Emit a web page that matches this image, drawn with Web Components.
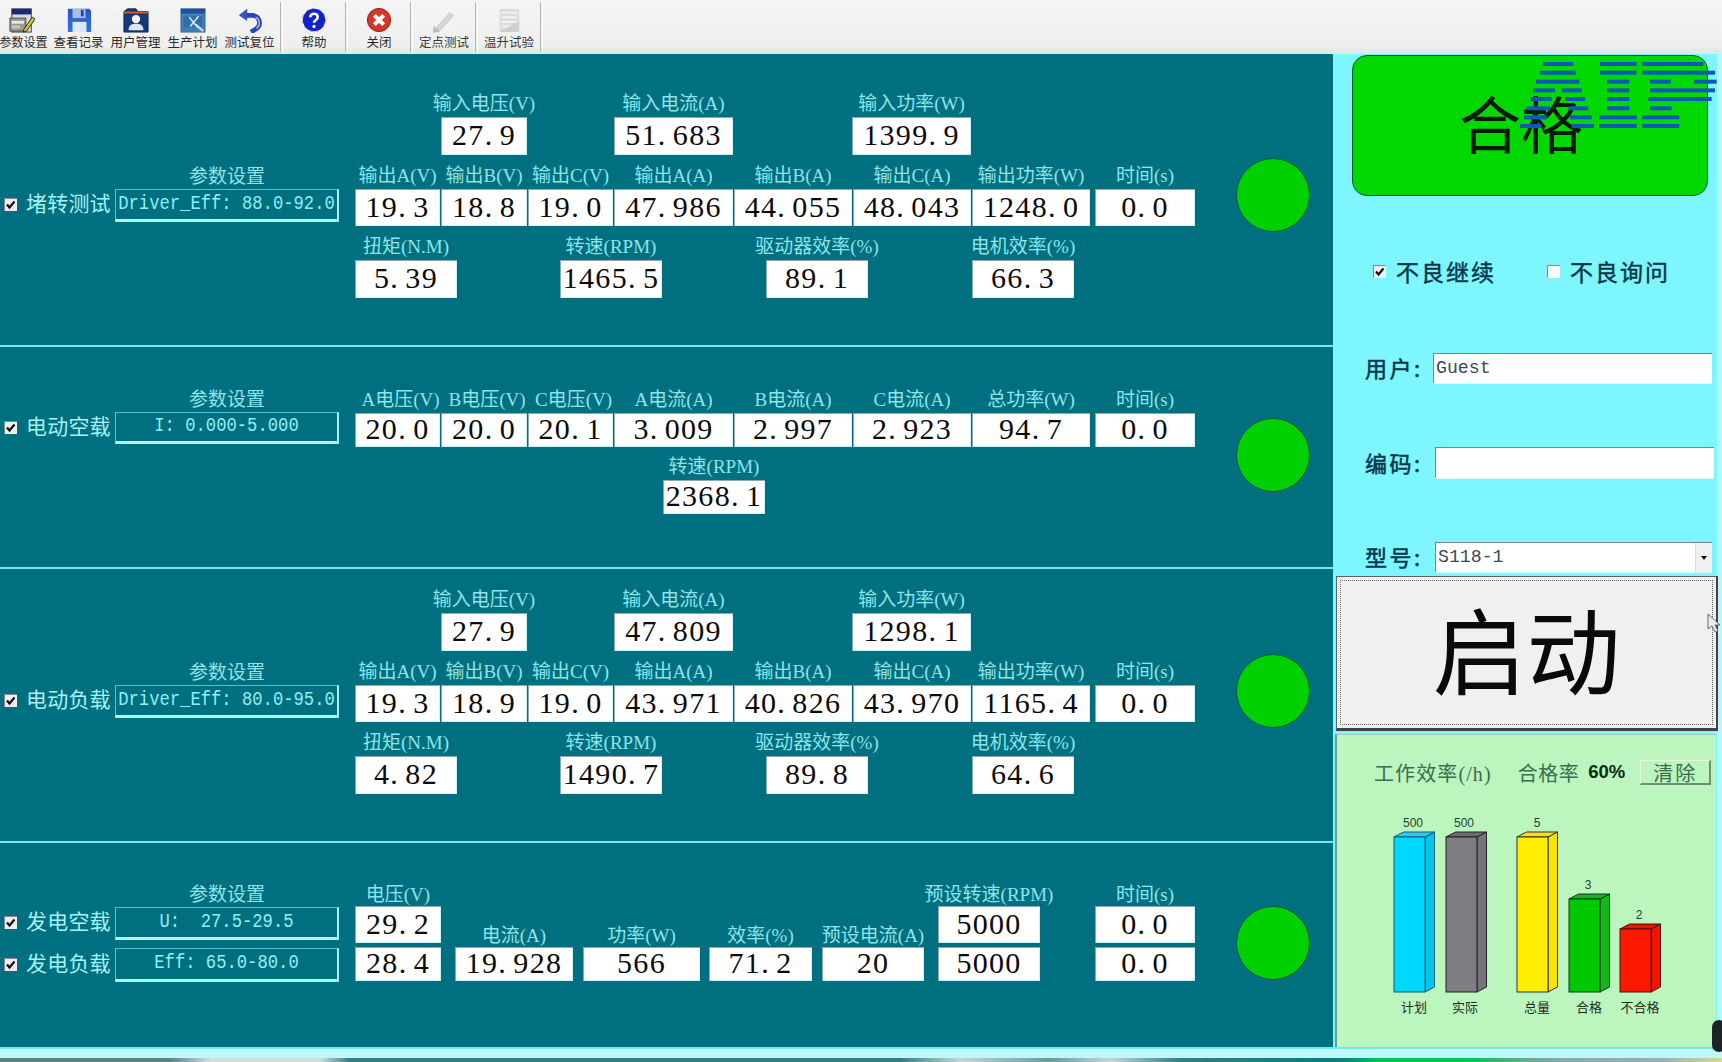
<!DOCTYPE html>
<html lang="zh"><head><meta charset="utf-8"><title>测试</title>
<style>
html,body{margin:0;padding:0;background:#007080;overflow:hidden}
body{width:1722px;height:1062px;font-family:"Liberation Serif","Noto Sans CJK SC",serif}
</style></head>
<body>
<test-app>
  <app-toolbar slot="top">
    <tool-button w="57" text="参数设置" icon="params" style="margin-left:-7px;--fs:12px;--tx:4px"></tool-button>
    <tool-button w="57" text="查看记录" icon="save"></tool-button>
    <tool-button w="57" text="用户管理" icon="user"></tool-button>
    <tool-button w="57" text="生产计划" icon="plan"></tool-button>
    <tool-button w="57" text="测试复位" icon="undo"></tool-button>
    <tool-sep style="margin-left:2px"></tool-sep>
    <tool-button w="62" text="帮助" icon="help"></tool-button>
    <tool-sep></tool-sep>
    <tool-button w="62" text="关闭" icon="close"></tool-button>
    <tool-sep></tool-sep>
    <tool-button w="62" text="定点测试" icon="pen"></tool-button>
    <tool-sep></tool-sep>
    <tool-button w="62" text="温升试验" icon="doc"></tool-button>
    <tool-sep></tool-sep>
  </app-toolbar>

  <test-section slot="tests" style="--h:293px;--head:111px;--center:37px;--lamp:104px">
    <test-head slot="head" name="堵转测试" param="Driver_Eff: 88.0-92.0" heading="参数设置" style="--ph:33px"></test-head>
    <metric-line>
      <metric-field label="输入电压(V)" value="27.9" ml="86" w="86" h="38"></metric-field>
      <metric-field label="输入电流(A)" value="51.683" ml="87" w="119" h="38"></metric-field>
      <metric-field label="输入功率(W)" value="1399.9" ml="119" w="119" h="38"></metric-field>
    </metric-line>
    <metric-line>
      <metric-field label="输出A(V)" value="19.3" w="85" h="37"></metric-field>
      <metric-field label="输出B(V)" value="18.8" ml="1" w="86" h="37"></metric-field>
      <metric-field label="输出C(V)" value="19.0" ml="1" w="85" h="37"></metric-field>
      <metric-field label="输出A(A)" value="47.986" ml="1" w="119" h="37"></metric-field>
      <metric-field label="输出B(A)" value="44.055" ml="1" w="118" h="37"></metric-field>
      <metric-field label="输出C(A)" value="48.043" ml="1" w="118" h="37"></metric-field>
      <metric-field label="输出功率(W)" value="1248.0" ml="1" w="118" h="37"></metric-field>
      <metric-field label="时间(s)" value="0.0" ml="5" w="100" h="37"></metric-field>
    </metric-line>
    <metric-line>
      <metric-field label="扭矩(N.M)" value="5.39" w="102" h="38"></metric-field>
      <metric-field label="转速(RPM)" value="1465.5" ml="103" w="102" h="38"></metric-field>
      <metric-field label="驱动器效率(%)" value="89.1" ml="104" w="102" h="38"></metric-field>
      <metric-field label="电机效率(%)" value="66.3" ml="104" w="102" h="38"></metric-field>
    </metric-line>
    <status-lamp slot="lamp"></status-lamp>
  </test-section>

  <test-section slot="tests" style="--h:222px;--head:41px;--center:40px;--lamp:71px;--gap:7px">
    <test-head slot="head" name="电动空载" param="I: 0.000-5.000" heading="参数设置" style="--ph:32px"></test-head>
    <metric-line>
      <metric-field label="A电压(V)" value="20.0" w="85" h="34" style="--lx:6px"></metric-field>
      <metric-field label="B电压(V)" value="20.0" ml="1" w="86" h="34" style="--lx:6px"></metric-field>
      <metric-field label="C电压(V)" value="20.1" ml="1" w="85" h="34" style="--lx:6px"></metric-field>
      <metric-field label="A电流(A)" value="3.009" ml="1" w="119" h="34"></metric-field>
      <metric-field label="B电流(A)" value="2.997" ml="1" w="118" h="34"></metric-field>
      <metric-field label="C电流(A)" value="2.923" ml="1" w="118" h="34"></metric-field>
      <metric-field label="总功率(W)" value="94.7" ml="1" w="118" h="34"></metric-field>
      <metric-field label="时间(s)" value="0.0" ml="5" w="100" h="34"></metric-field>
    </metric-line>
    <metric-line>
      <metric-field label="转速(RPM)" value="2368.1" ml="308" w="102" h="34"></metric-field>
    </metric-line>
    <status-lamp slot="lamp"></status-lamp>
  </test-section>

  <test-section slot="tests" style="--h:274px;--head:92px;--center:18px;--lamp:85px">
    <test-head slot="head" name="电动负载" param="Driver_Eff: 80.0-95.0" heading="参数设置" style="--ph:33px"></test-head>
    <metric-line>
      <metric-field label="输入电压(V)" value="27.9" ml="86" w="86" h="38"></metric-field>
      <metric-field label="输入电流(A)" value="47.809" ml="87" w="119" h="38"></metric-field>
      <metric-field label="输入功率(W)" value="1298.1" ml="119" w="119" h="38"></metric-field>
    </metric-line>
    <metric-line>
      <metric-field label="输出A(V)" value="19.3" w="85" h="37"></metric-field>
      <metric-field label="输出B(V)" value="18.9" ml="1" w="86" h="37"></metric-field>
      <metric-field label="输出C(V)" value="19.0" ml="1" w="85" h="37"></metric-field>
      <metric-field label="输出A(A)" value="43.971" ml="1" w="119" h="37"></metric-field>
      <metric-field label="输出B(A)" value="40.826" ml="1" w="118" h="37"></metric-field>
      <metric-field label="输出C(A)" value="43.970" ml="1" w="118" h="37"></metric-field>
      <metric-field label="输出功率(W)" value="1165.4" ml="1" w="118" h="37"></metric-field>
      <metric-field label="时间(s)" value="0.0" ml="5" w="100" h="37"></metric-field>
    </metric-line>
    <metric-line>
      <metric-field label="扭矩(N.M)" value="4.82" w="102" h="38"></metric-field>
      <metric-field label="转速(RPM)" value="1490.7" ml="103" w="102" h="38"></metric-field>
      <metric-field label="驱动器效率(%)" value="89.8" ml="104" w="102" h="38"></metric-field>
      <metric-field label="电机效率(%)" value="64.6" ml="104" w="102" h="38"></metric-field>
    </metric-line>
    <status-lamp slot="lamp"></status-lamp>
  </test-section>

  <test-section slot="tests" style="--h:204px;--head:40px;--center:41px;--lamp:63px;--rule:transparent">
    <test-head slot="head" name="发电空载" param="U:  27.5-29.5" heading="参数设置" style="--ph:33px"></test-head>
    <test-head slot="head" name="发电负载" param="Eff: 65.0-80.0" style="--ph:34px;margin-top:8px"></test-head>
    <metric-line>
      <metric-field label="电压(V)" value="29.2" value2="28.4" w="86" h="37" h2="34" style="--lh:22px"></metric-field>
      <metric-field label="电流(A)" value="19.928" ml="14" w="118" h="34" style="--lh:22px"></metric-field>
      <metric-field label="功率(W)" value="566" ml="10" w="117" h="34" style="--lh:22px"></metric-field>
      <metric-field label="效率(%)" value="71.2" ml="9" w="103" h="34" style="--lh:22px"></metric-field>
      <metric-field label="预设电流(A)" value="20" ml="10" w="102" h="34" style="--lh:22px"></metric-field>
      <metric-field label="预设转速(RPM)" value="5000" value2="5000" ml="14" w="102" h="37" h2="34" style="--lh:22px"></metric-field>
      <metric-field label="时间(s)" value="0.0" value2="0.0" ml="55" w="100" h="37" h2="34" style="--lh:22px"></metric-field>
    </metric-line>
    <status-lamp slot="lamp"></status-lamp>
  </test-section>

  <side-panel slot="side">
    <result-box>合格</result-box>
    <option-row>
      <check-box checked style="--cb:#f4eef4"></check-box><span>不良继续</span>
      <check-box style="margin-left:51px;--cb:#fff"></check-box><span>不良询问</span>
    </option-row>
    <form-row label="用户:" value="Guest" w="279" lw="68" h="30" style="margin-top:70px"></form-row>
    <form-row label="编码:" value="" w="279" lw="70" h="31" style="margin-top:64px"></form-row>
    <form-row label="型号:" value="S118-1" w="277" lw="70" h="30" combo style="margin-top:64px"></form-row>
    <start-button>启动</start-button>
    <stats-panel></stats-panel>
  </side-panel>
</test-app>

<script>
const CJK='"Liberation Serif","Noto Sans CJK SC",serif';
const def=(n,html,extra)=>{
  customElements.define(n,class extends HTMLElement{
    constructor(){super();this.attachShadow({mode:'open'}).innerHTML=html}
    connectedCallback(){extra&&extra.call(this,this.shadowRoot)}
  });
};

def('test-app',`<style>
:host{display:grid;position:relative;width:1722px;height:1062px;overflow:hidden;
grid-template-columns:1333px 389px;grid-template-rows:54px 993px 11px 4px;font-family:${CJK}}
.top{grid-column:1/3}
.tests{display:flex;flex-direction:column;background:#007080}
.band{grid-column:1/3;background:linear-gradient(#6fe9f2 0 2px,#bff7fb 2px)}
.strip{grid-column:1/3;background:linear-gradient(90deg,#5d7f84 0,#5d7f84 170px,#d4dcdc 210px,#d4dcdc 320px,#2f7f86 350px,#2f7f86 900px,#c8d4d4 960px,#6a9a9a 1050px,#c8d4d4 1110px,#2f7f86 1180px,#00807f 1340px,#0cc050 1380px,#0cc050 1470px,#8aa8a8 1560px,#9ab0b0 1660px,#d8d890 1722px)}
.blob{position:absolute;left:1712px;top:1020px;width:14px;height:32px;border-radius:8px;background:#1c2225}
</style>
<div class="top"><slot name="top"></slot></div>
<div class="tests"><slot name="tests"></slot></div>
<slot name="side"></slot>
<div class="band"></div><div class="strip"></div><div class="blob"></div>`);

def('app-toolbar',`<style>
:host{display:flex;height:54px;background:linear-gradient(#f4f4f4,#efefef 85%,#dfe4e4);font-family:"Noto Sans CJK SC",sans-serif}
</style><slot></slot>`);

const ICONS={
params:`<rect x="3" y="2" width="21" height="25" fill="#d4d8e0" stroke="#3a3f55"/><rect x="3" y="2" width="21" height="6" fill="#1d2a70"/><rect x="1" y="12" width="17" height="14" fill="#9a9a94" stroke="#444"/><rect x="3" y="15" width="13" height="3" fill="#e8e8e0"/><rect x="3" y="20" width="9" height="3" fill="#c8c8c0"/><path d="M16 24l9-13 3 2-9 13-4 1z" fill="#d8c22a" stroke="#222" stroke-width="1"/>`,
save:`<path d="M2 2h23l2 2v23H2z" fill="url(#fg)"/><rect x="7" y="2" width="14" height="10" fill="#a8bde0"/><rect x="16" y="3" width="3" height="7" fill="#1d4bb0"/><rect x="7" y="16" width="15" height="11" fill="#dfe7f4"/><defs><linearGradient id="fg" x1="0" y1="0" x2="0" y2="1"><stop offset="0" stop-color="#2d55b8"/><stop offset="1" stop-color="#2a78e8"/></linearGradient></defs>`,
user:`<path d="M1 5l4-3h9l2 3h11v22H1z" fill="#143a7a" stroke="#0d2650"/><rect x="1" y="5" width="26" height="2" fill="#d9572a"/><circle cx="14" cy="13" r="4.5" fill="#f2f2f2"/><path d="M6 25c0-6 4-7 8-7s8 1 8 7z" fill="#dfe6f2"/>`,
plan:`<rect x="1" y="2" width="26" height="25" fill="#3d7fbb" stroke="#4a6a90"/><rect x="1" y="2" width="26" height="5" fill="#1f4f95"/><rect x="4" y="10" width="20" height="12" fill="#2f6ca8"/><path d="M10 11l9 11M20 10l-9 11" stroke="#dfe9f4" stroke-width="1.6"/><path d="M17 19l8 7" stroke="#c8d8ea" stroke-width="2.6"/>`,
undo:`<path d="M9 9h8a8 8 0 0 1 3 15l-5 3" fill="none" stroke="#2b44b5" stroke-width="5"/><path d="M2 9l9-7v13z" fill="#3355c4"/><path d="M20 11a7 7 0 0 1 1 12" fill="none" stroke="#a7b8e6" stroke-width="1.5"/>`,
help:`<circle cx="14" cy="14" r="12" fill="#1322c8"/><circle cx="14" cy="14" r="12.5" fill="none" stroke="#8a96a8" stroke-dasharray="3 4"/><path d="M10 11c0-5 8-5 8 0 0 3-4 3-4 6" fill="none" stroke="#fff" stroke-width="2.8"/><circle cx="14" cy="21" r="1.8" fill="#fff"/>`,
close:`<circle cx="14" cy="14" r="12.5" fill="#d6362a" stroke="#8a1a14"/><path d="M9 9l10 10M19 9L9 19" stroke="#fff" stroke-width="4.4"/>`,
pen:`<rect x="4" y="2" width="22" height="25" fill="#f3f3f3"/><path d="M4 26l17-20M7 27l17-19" stroke="#d2d2d2" stroke-width="3"/><path d="M3 20l6 6-7 2z" fill="#bdbdbd"/>`,
doc:`<rect x="4" y="2" width="21" height="25" fill="#dcdcdc"/><path d="M6 6h17M6 11h17M6 16h17M6 21h17" stroke="#f2f2f2" stroke-width="2"/><path d="M4 27l21-12v12z" fill="#cfcfcf"/>`
};
def('tool-button',`<style>
:host{display:flex;flex-direction:column;align-items:center;flex:none;padding-top:7px;box-sizing:border-box;height:54px;color:#2a2a2a}
svg{width:26px;height:26px;display:block}
span{font-size:var(--fs,12.5px);line-height:14px;margin-top:2px;margin-left:var(--tx,0);white-space:nowrap}
</style><svg viewBox="0 0 28 28"></svg><span></span>`,function(r){
  this.style.width=this.getAttribute('w')+'px';
  r.querySelector('span').textContent=this.getAttribute('text');
  r.querySelector('svg').innerHTML=ICONS[this.getAttribute('icon')];
  if(['pen','doc'].includes(this.getAttribute('icon')))r.querySelector('span').style.color='#3a3a3a';
});
def('tool-sep',`<style>:host{display:block;flex:none;width:3px;height:50px;box-sizing:border-box;border-left:1px solid #b4b4b4;border-right:1px solid #fff;margin-top:2px}</style>`);

def('test-section',`<style>
:host{display:grid;grid-template-columns:355px 881px 74px;box-sizing:border-box;height:var(--h);border-bottom:2px solid var(--rule,#6fe9f2);flex:none}
.l{padding-top:var(--head)}
.c{padding-top:var(--center);display:flex;flex-direction:column;gap:var(--gap,8px)}
.p{padding-top:var(--lamp)}
</style><div class="l"><slot name="head"></slot></div><div class="c"><slot></slot></div><div class="p"><slot name="lamp"></slot></div>`);

def('test-head',`<style>
:host{display:grid;grid-template-columns:13px 98px 224px;padding-left:4px;color:#a8f2f6}
.t{grid-column:3;grid-row:1;height:24px;line-height:24px;text-align:center;font-size:19px;color:#8fe4ea}
check-box{grid-column:1;grid-row:2;align-self:center;margin-top:-2px}
.n{grid-column:2;grid-row:2;align-self:center;font-size:21px;line-height:24px;margin:0 0 3px 9px;letter-spacing:.2px;white-space:nowrap;color:#a8f2f6}
.p{grid-column:3;grid-row:2;height:var(--ph);box-sizing:border-box;display:flex;align-items:center;justify-content:center;
border:1px solid #52c4cf;border-bottom:3px solid #a9f4f8;border-right:2px solid #a9f4f8;width:224px;
font:17.2px/1 "Liberation Mono",monospace;color:#93eef2;white-space:pre;padding-bottom:2px}
.p span{display:block;transform:scaleY(1.2)}
</style><div class="t"></div><check-box checked style="--cb:#eee"></check-box><div class="n"></div><div class="p"><span></span></div>`,function(r){
  const h=this.getAttribute('heading');const t=r.querySelector('.t');
  if(h)t.textContent=h;else t.remove();
  r.querySelector('.n').textContent=this.getAttribute('name');
  r.querySelector('.p span').textContent=this.getAttribute('param');
});

def('check-box',`<style>
:host{display:block;width:13px;height:13px;background:var(--cb,#fff);box-shadow:inset 1px 1px 0 #8a8a8a}
svg{display:block;width:13px;height:13px}
</style><svg viewBox="0 0 13 13"><path d="M3 6.5l2.5 3 5-6" fill="none" stroke="#111" stroke-width="2.2"/></svg>`,function(r){
  if(!this.hasAttribute('checked'))r.querySelector('svg').style.display='none';
});

def('metric-line',`<style>:host{display:flex;align-items:flex-end}</style><slot></slot>`);

def('metric-field',`<style>
:host{display:flex;flex-direction:column;flex:none}
.l{height:var(--lh,26px);line-height:var(--lh,26px);display:flex;justify-content:center;white-space:nowrap;font-size:19px;color:#8fe4ea;padding-left:var(--lx,0)}
.l span{flex:none}
.v{background:#fff;box-sizing:border-box;display:flex;align-items:center;justify-content:center;color:#0a0a0a;padding-bottom:2px;
font:30px/1 "Liberation Serif",serif;letter-spacing:1.3px;white-space:nowrap;
box-shadow:inset 1px 1px 0 #8fa9b0,inset -1px -1px 0 #c8f4f6}
.v+.v{margin-top:4px}
.d{display:inline-block;width:15px}
</style><div class="l"><span></span></div>`,function(r){
  this.style.width=this.getAttribute('w')+'px';
  this.style.marginLeft=(this.getAttribute('ml')||0)+'px';
  r.querySelector('.l span').textContent=this.getAttribute('label');
  const add=(val,h)=>{const b=document.createElement('div');b.className='v';b.style.height=h+'px';
    if(+h<=34)b.style.paddingBottom='3px';
    val.split('.').forEach((p,i)=>{if(i){const s=document.createElement('span');s.className='d';s.textContent='.';b.append(s)}b.append(p)});
    r.append(b)};
  if(r.querySelector('.v'))return;
  add(this.getAttribute('value'),this.getAttribute('h'));
  if(this.hasAttribute('value2'))add(this.getAttribute('value2'),this.getAttribute('h2'));
});

def('status-lamp',`<style>:host{display:block;width:74px;height:74px;border-radius:50%;background:#00d000;box-sizing:border-box;border:1.5px solid #0b5a3a}</style>`);

def('side-panel',`<style>
:host{display:flex;flex-direction:column;background:linear-gradient(270deg,#b8f8fb 0 5px,#7df6ff 5px);font-family:${CJK}}
</style><slot></slot>`);

const stripes=[[72,[[670,760],[840,950],[967,1150]]],[98,[[660,768],[840,950],[967,1185]]],[125,[[648,778],[862,928],[990,1052],[1122,1190]]],[151,[[640,705],[725,785],[862,928],[990,1185]]],[177,[[632,695],[735,795],[862,928],[985,1175]]],[205,[[620,690],[745,805],[862,928],[990,1055]]],[232,[[612,680],[750,815],[838,950],[967,1078]]],[258,[[600,665],[755,822],[838,950],[967,1078]]]];
def('result-box',`<style>
:host{display:flex;align-items:center;justify-content:center;position:relative;margin:1px 0 0 19px;width:356px;height:141px;box-sizing:border-box;
background:#00d800;border:1px solid #0a5a20;border-radius:15px;font:62px/1 "Noto Sans CJK SC",sans-serif;color:#0a1a0a;padding:0 18px 8px 0}
svg{position:absolute;left:167px;top:4px;width:200px;height:70px;overflow:visible}
</style><slot></slot><svg viewBox="600 60 600 210"></svg>`,function(r){
  r.querySelector('svg').innerHTML=stripes.flatMap(([y,s])=>s.map(([a,b])=>`<rect x="${a}" y="${y-6}" width="${b-a}" height="12" fill="#0f58b8"/>`)).join('');
});

def('option-row',`<style>
:host{display:flex;align-items:center;height:24px;margin-top:63px;padding-left:40px;color:#06354a;font:23px/24px "Noto Sans CJK SC",sans-serif}
::slotted(span){margin-left:10px;letter-spacing:2px;white-space:nowrap;-webkit-text-stroke:.4px #06354a}
</style><slot></slot>`);

def('form-row',`<style>
:host{display:flex;padding-left:32px;flex:none}
.l{font:22px/1 "Noto Sans CJK SC",sans-serif;color:#06354a;display:flex;align-items:center;flex:none;-webkit-text-stroke:.5px #06354a;white-space:nowrap;letter-spacing:2.5px;padding-bottom:2px;box-sizing:border-box}
.i{position:relative;background:#fff;box-sizing:border-box;font:18.2px/1 "Liberation Mono",monospace;color:#3a4a50;display:flex;align-items:center;padding-left:2px;
border-top:1px solid #6f8a92;border-left:1px solid #6f8a92;box-shadow:0 1px 0 #d8fbfc}
.b{position:absolute;right:0;top:0;bottom:0;width:16px;background:#f0f0f0;border-left:1px solid #ddd;display:flex;align-items:center;justify-content:center}
.b i{display:block;border:3.5px solid transparent;border-top:4px solid #111;border-bottom:0}
</style><div class="l"></div><div class="i"><span></span></div>`,function(r){
  const l=r.querySelector('.l');l.textContent=this.getAttribute('label');l.style.width=this.getAttribute('lw')+'px';
  const i=r.querySelector('.i');i.style.width=this.getAttribute('w')+'px';i.style.height=this.getAttribute('h')+'px';
  r.querySelector('span').textContent=this.getAttribute('value');
  if(this.hasAttribute('combo')&&!r.querySelector('.b')){const b=document.createElement('div');b.className='b';b.innerHTML='<i></i>';i.append(b)}
});

def('start-button',`<style>
:host{display:flex;align-items:center;justify-content:center;position:relative;flex:none;margin:4px 0 0 3px;width:382px;height:155px;box-sizing:border-box;
background:#f0f0f0;border:1px solid #5a6468;border-right:2px solid #3c4448;border-bottom:3px solid #3c4448;font:94px/1 "Noto Sans CJK SC",sans-serif;color:#0a0a0a;padding:0 0 12px 0}
.f{position:absolute;inset:3px;border:1px dotted #666}
svg{position:absolute;left:370px;top:36px;width:13px;height:20px}
</style><div class="f"></div><slot></slot><svg viewBox="0 0 13 20"><path d="M1 1v15l4-3 3 6 3-1-3-6h5z" fill="#e8eef0" stroke="#667"/></svg>`);

def('stats-panel',`<style>
:host{display:block;flex:none;margin:3px 0 0 2px;width:381px;height:313px;box-sizing:border-box;background:#bcf5be;border-left:2px solid #6e9a88;border-top:1px solid #a6c8a8;font-family:${CJK};color:#3a6e50}
.h{display:flex;align-items:center;padding:25px 0 0 37px;font-size:20px;height:25px;box-sizing:content-box;white-space:nowrap}
.e{letter-spacing:1.1px}
.r{margin-left:26px;letter-spacing:.5px}
.p{margin-left:9px;font:700 18.5px/1 "Liberation Sans",sans-serif;color:#0b2a18}
.b{margin-left:15px;width:71px;height:25px;box-sizing:border-box;display:flex;align-items:center;justify-content:center;border-right:2px solid #6e8f74;border-bottom:2px solid #6e8f74;border-top:1px solid #e8fbe8;border-left:1px solid #e8fbe8;letter-spacing:2px}
svg{display:block;margin-top:26px}
text{font-family:"Liberation Sans","Noto Sans CJK SC",sans-serif;font-size:12px;text-anchor:middle;fill:#24432f}
text.c{font-family:"Noto Sans CJK SC",sans-serif;font-size:13px;fill:#1d2d22}
</style>
<div class="h"><span class="e">工作效率(/h)</span><span class="r">合格率</span><span class="p">60%</span><span class="b">清除</span></div>
<svg width="379" height="210" viewBox="1337 811 379 210"></svg>`,function(r){
  const base=992,w=31,dx=9.5,dy=5;
  const bars=[
   {x:1394,t:837,c:'#00d8ff',s:'#00c6ea',tp:'#36c8e8',st:'#0a5a78',lab:'计划',val:'500',lx:1414,vx:1413},
   {x:1446,t:837,c:'#807c84',s:'#77737a',tp:'#6e6a70',st:'#222',lab:'实际',val:'500',lx:1465,vx:1464},
   {x:1517,t:837,c:'#ffee00',s:'#f8e400',tp:'#f4e020',st:'#333',lab:'总量',val:'5',lx:1537,vx:1537},
   {x:1569,t:899,c:'#00c800',s:'#10b818',tp:'#10b818',st:'#0c3a14',lab:'合格',val:'3',lx:1589,vx:1588},
   {x:1620,t:929,c:'#ff1800',s:'#ee1600',tp:'#e81600',st:'#4a1008',lab:'不合格',val:'2',lx:1640,vx:1639}];
  r.querySelector('svg').innerHTML=bars.map(b=>`
   <path d="M${b.x+w} ${b.t}l${dx} -${dy}V${base-dy}l-${dx} ${dy}z" fill="${b.s}" stroke="${b.st}"/>
   <path d="M${b.x} ${b.t}l${dx} -${dy}h${w}l-${dx} ${dy}z" fill="${b.tp}" stroke="${b.st}"/>
   <rect x="${b.x}" y="${b.t}" width="${w}" height="${base-b.t}" fill="${b.c}" stroke="${b.st}"/>
   <text x="${b.vx}" y="${b.t-10}">${b.val}</text>
   <text class="c" x="${b.lx}" y="1012">${b.lab}</text>`).join('');
});
</script>
</body></html>
